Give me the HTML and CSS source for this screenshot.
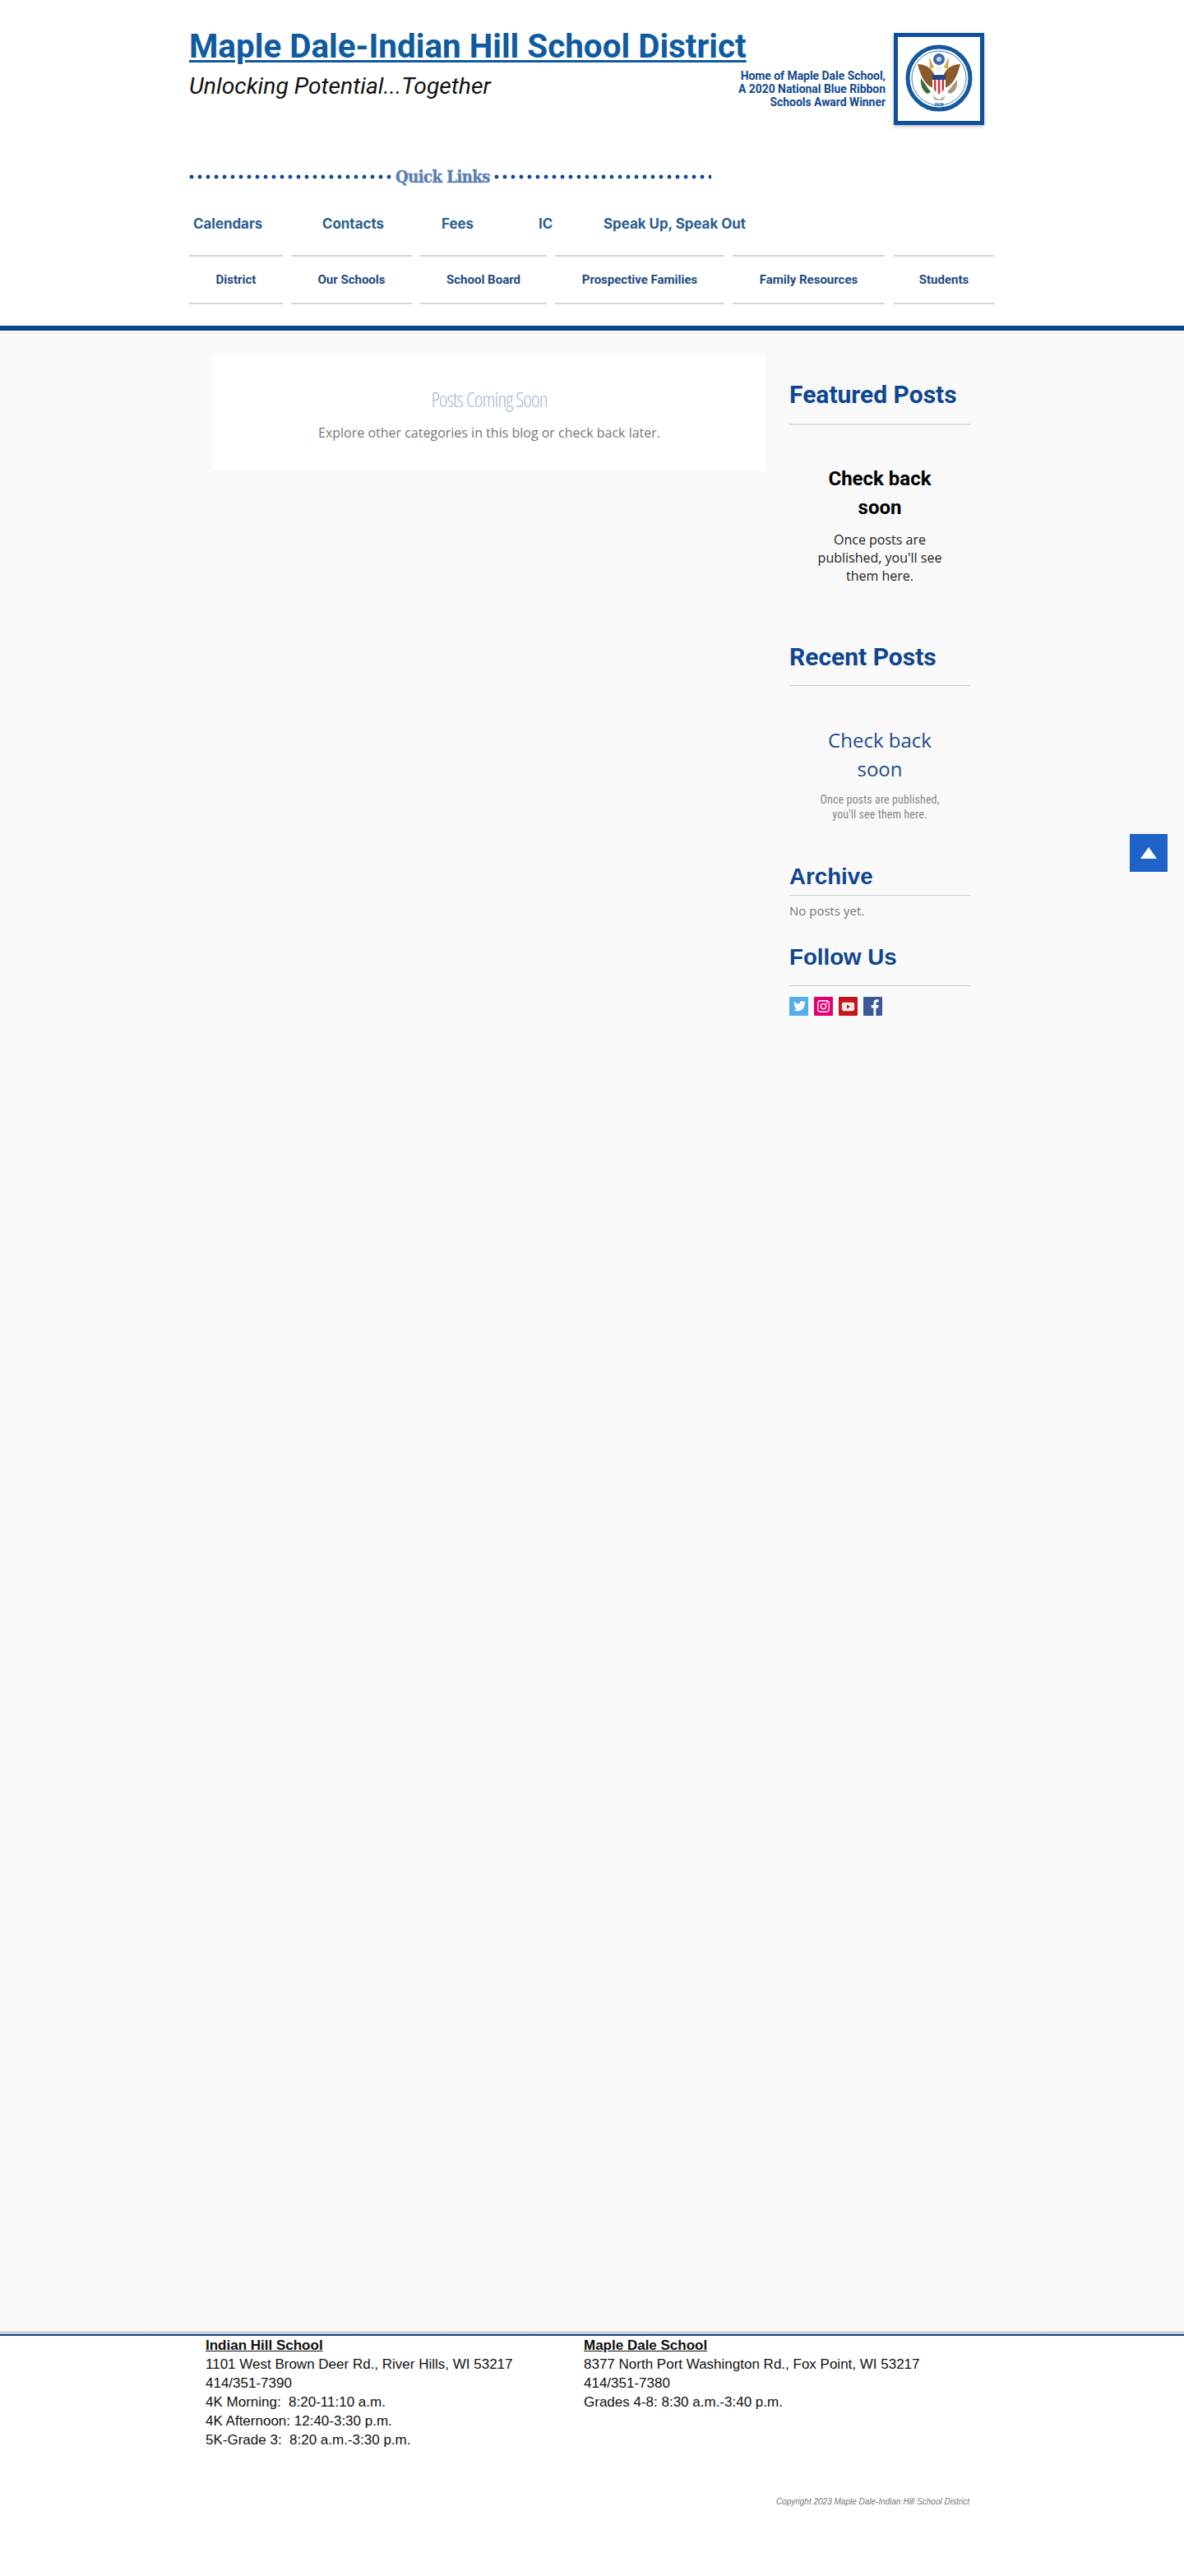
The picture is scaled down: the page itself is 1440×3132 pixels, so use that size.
FILE: index.html
```html
<!DOCTYPE html>
<html>
<head lang="en">
    <meta charset="UTF-8">
    <title>Maple Dale-Indian Hill School District</title>
    <link rel="stylesheet" href="styles.css">
</head>
<body>
<header class="site-head">
    <div class="wrap">
        <div class="brand">
            <div class="brand-text">
                <a class="site-title" href="#">Maple Dale-Indian Hill School District</a>
                <p class="tagline">Unlocking Potential...Together</p>
            </div>
            <p class="award">Home of Maple Dale School,<br/>A 2020 National Blue Ribbon<br/>Schools Award Winner</p>
            <div class="seal">
                <svg viewBox="0 0 102 104" width="102" height="104">
                    <circle cx="50" cy="50" r="38" fill="#fff" stroke="#14589f" stroke-width="5"/>
                    <circle cx="50" cy="50" r="33" fill="#fff" stroke="#14589f" stroke-width=".8"/>
                    <circle cx="50" cy="27" r="7" fill="#3f68a8"/>
                    <circle cx="50" cy="27" r="3" fill="#c9d4e6"/>
                    <path d="M38 24l6 13-5 2zM62 24l-6 13 5 2z" fill="#cfa945"/>
                    <path d="M24 33c9 0 16 4 20 12l-1 17c-9-3-15-13-19-29z" fill="#8a5a2b"/>
                    <path d="M76 33c-9 0-16 4-20 12l1 17c9-3 15-13 19-29z" fill="#8a5a2b"/>
                    <circle cx="50" cy="38" r="4" fill="#f3f1e8"/>
                    <path d="M28 50l12 17-4 2c-6-3-9-11-8-19z" fill="#3d6b34"/>
                    <path d="M72 52l-12 15 4 2c6-3 9-9 8-17z" fill="#a89a80"/>
                    <path d="M42 46h16v14c0 5-4 8-8 10-4-2-8-5-8-10z" fill="#fff"/>
                    <path d="M42 46h16v6h-16z" fill="#27468c"/>
                    <path d="M44 52h2.400v15l-2.400-3zM48.800 52h2.400v17h-2.400zM53.600 52h2.400v12l-2.400 3z" fill="#c8323c"/>
                    <path d="M42 71l8 5 8-5-3 6h-10z" fill="#b9b4a6"/>
                    <text class="seal-year" x="50" y="84" text-anchor="middle">2020</text>
                </svg>
            </div>
        </div>

        <div class="quick">
            <span class="dots dots-left"></span>
            <span class="quick-label">Quick Links</span>
            <span class="dots dots-right"></span>
        </div>

        <nav class="links">
            <a href="#">Calendars</a>
            <a href="#">Contacts</a>
            <a href="#">Fees</a>
            <a href="#">IC</a>
            <a href="#">Speak Up, Speak Out</a>
        </nav>

        <nav class="menu">
            <a class="m1" href="#">District</a>
            <a class="m2" href="#">Our Schools</a>
            <a class="m3" href="#">School Board</a>
            <a class="m4" href="#">Prospective Families</a>
            <a class="m5" href="#">Family Resources</a>
            <a class="m6" href="#">Students</a>
        </nav>
    </div>
</header>

<main class="content">
    <div class="wrap columns">
        <section class="empty-card">
            <h2>Posts Coming Soon</h2>
            <p>Explore other categories in this blog or check back later.</p>
        </section>

        <aside class="sidebar">
            <h3 class="side-title featured">Featured Posts</h3>
            <div class="soon-bold">Check back<br/>soon</div>
            <p class="soon-dark">Once posts are<br/>published, you'll see<br/>them here.</p>

            <h3 class="side-title recent">Recent Posts</h3>
            <div class="soon-blue">Check back<br/>soon</div>
            <p class="soon-grey">Once posts are published,<br/>you'll see them here.</p>

            <h3 class="side-title archive">Archive</h3>
            <p class="no-posts">No posts yet.</p>

            <h3 class="side-title follow">Follow Us</h3>
            <div class="social">
                <a class="tw" href="#"><svg viewBox="0 0 24 24"><path d="M19.500 8.300c0 .2 0 .3 0 .5 0 5-3.800 9.200-9.300 9.200-1.900 0-3.600-.5-5-1.500 1.600.2 3.400-.3 4.600-1.300-1.400 0-2.600-1-3-2.200.5.100 1 .1 1.500-.1-1.500-.3-2.600-1.600-2.600-3.200.4.200.9.400 1.500.4-1.400-1-1.800-2.900-1-4.300 1.600 2 4 3.300 6.700 3.400-.5-2.100 1.100-4 3.200-4 .9 0 1.800.4 2.400 1 .7-.1 1.400-.4 2-.8-.2.700-.7 1.300-1.400 1.700.6-.1 1.300-.2 1.900-.5-.5.700-1 1.300-1.500 1.700z" fill="#fff"/></svg></a>
                <a class="ig" href="#"><svg viewBox="0 0 24 24"><rect x="5" y="5" width="14" height="14" rx="3.500" fill="none" stroke="#fff" stroke-width="1.400"/><circle cx="12" cy="12" r="3.300" fill="none" stroke="#fff" stroke-width="1.400"/><circle cx="16.200" cy="7.800" r=".9" fill="#fff"/></svg></a>
                <a class="yt" href="#"><svg viewBox="0 0 24 24"><rect x="4" y="7" width="16" height="11" rx="2.500" fill="#f4e6e0"/><path d="M10.500 10l4 2.500-4 2.500z" fill="#a81a20"/></svg></a>
                <a class="fb" href="#"><svg viewBox="0 0 24 24"><path d="M13 24v-10h-2.800v-3.500h2.800v-2.500c0-3 1.700-4.500 4.300-4.500 1 0 1.900.1 2.200.1v3h-1.700c-1.400 0-1.700.7-1.700 1.700v2.200h3.300l-.5 3.500h-2.800v10z" fill="#fff"/></svg></a>
            </div>
        </aside>
    </div>
</main>

<a class="to-top" href="#"><span class="arrow"></span></a>

<footer class="site-foot">
    <div class="wrap">
        <div class="schools">
            <div class="school">
                <strong>Indian Hill School</strong><br/>
                1101 West Brown Deer Rd., River Hills, WI 53217<br/>
                414/351-7390<br/>
                4K Morning:&nbsp; 8:20-11:10 a.m.<br/>
                4K Afternoon: 12:40-3:30 p.m.<br/>
                5K-Grade 3:&nbsp; 8:20 a.m.-3:30 p.m.
            </div>
            <div class="school">
                <strong>Maple Dale School</strong><br/>
                8377 North Port Washington Rd., Fox Point, WI 53217<br/>
                414/351-7380<br/>
                Grades 4-8: 8:30 a.m.-3:40 p.m.
            </div>
        </div>
        <p class="copyright">Copyright 2023 Maple Dale-Indian Hill School District</p>
    </div>
</footer>
</body>
</html>
```

FILE: styles.css
```css
* {
    margin: 0;
    padding: 0;
    box-sizing: border-box;
}
html, body {
    height: 100%;
}
body {
    position: relative;
    display: flex;
    flex-direction: column;
    min-height: 3132px;
    background: #f9f9f9;
    font-family: "Open Sans", sans-serif;
}
a {
    color: inherit;
    text-decoration: none;
}
.wrap {
    width: 980px;
    margin: 0 auto;
}

/* header */
.site-head {
    height: 396px;
    background: #fff;
}
.brand {
    display: flex;
    height: 191px;
    padding-top: 33px;
}
.brand-text {
    width: 667px;
}
.site-title {
    display: inline-block;
    font: 700 40.4px/47px Roboto, sans-serif;
    color: #0f5ba0;
    text-decoration: underline;
    text-decoration-thickness: 3px;
    text-underline-offset: 3px;
    white-space: nowrap;
}
.tagline {
    margin-top: 8px;
    font: italic 400 28.3px/34px Roboto, sans-serif;
    color: #111;
}
.award {
    width: 180px;
    margin-top: 51px;
    font: 700 13.9px/16px Roboto, sans-serif;
    color: #10498f;
    text-align: right;
    white-space: nowrap;
}
.seal {
    width: 110px;
    height: 112px;
    margin: 7px 0 0 10px;
    background: #fff;
    border: 5px solid #0f4f9e;
    box-shadow: 0 2px 4px rgba(0, 0, 0, .25);
}
.seal svg {
    display: block;
}
.seal-year {
    font: 700 5px Roboto, sans-serif;
    fill: #14589f;
}

.quick {
    display: flex;
    align-items: center;
    width: 640px;
    height: 48px;
}
.quick-label {
    margin: 0 5px;
    font: 700 20px/24px "DejaVu Serif Condensed", "DejaVu Serif", serif;
    letter-spacing: -.5px;
    color: #5a7fb0;
    -webkit-text-stroke: .4px #5a7fb0;
    white-space: nowrap;
}
.dots {
    height: 6px;
    background: radial-gradient(circle at center, #14478c 2.2px, transparent 2.7px) -2px center / 10px 6px repeat-x;
}
.dots-left {
    width: 246px;
}
.dots-right {
    width: 264px;
}

.links {
    display: grid;
    grid-template-columns: 157px 145px 118px 79px auto;
    height: 71px;
    align-items: center;
    padding: 0 0 5px 5px;
    font: 700 16.9px/20px Inter, sans-serif;
    color: #2a5e90;
}
.menu {
    display: flex;
    gap: 10px;
    height: 60px;
    width: 980px;
}
.menu a {
    display: flex;
    align-items: center;
    justify-content: center;
    height: 60px;
    border-top: 2px solid #d4d4d4;
    border-bottom: 2px solid #d4d4d4;
    font: 700 15px/18px Roboto, sans-serif;
    color: #1f4a80;
}
.m1 { width: 114px; }
.m2 { width: 147px; }
.m3 { width: 154px; }
.m4 { width: 206px; }
.m5 { width: 185px; }
.m6 { width: 122px; margin-left: 1px; }

/* main */
.content {
    flex: 1;
    background: linear-gradient(#0f4690, #0f4690) top / 100% 6px no-repeat,
        linear-gradient(#0b3c80, #0b3c80) 0 2px / 100% 2px no-repeat,
        linear-gradient(#fff 8px, #eeeeea 8px, #eeeeea 10px, #fff 10px, #fff 12px, #f9f9f9 12px);
}
.columns {
    display: flex;
    align-items: flex-start;
    padding-top: 36px;
}
.empty-card {
    width: 672px;
    height: 140px;
    margin-left: 29px;
    padding-top: 36px;
    background: #fff;
    text-align: center;
}
.empty-card h2 {
    font: 300 25px/34px "Open Sans", sans-serif;
    font-stretch: 75%;
    letter-spacing: -.8px;
    color: #a3b9d0;
}
.empty-card p {
    margin-top: 13px;
    font-size: 16px;
    line-height: 22px;
    color: #777;
}
.sidebar {
    width: 220px;
    margin-left: 29px;
}
.side-title {
    font: 700 30px/36px Roboto, sans-serif;
    color: #0f4690;
    border-bottom: 1px solid #ccc;
}
.featured {
    margin-top: 30px;
    padding-bottom: 17px;
    border-bottom: 2px solid #ddd;
}
.recent {
    margin-top: 70px;
    padding-bottom: 16px;
}
.archive, .follow {
    font: 700 27.7px/36px "Liberation Sans", Arial, sans-serif;
}
.archive {
    margin-top: 49px;
    padding-bottom: 4px;
}
.follow {
    margin-top: 29px;
    padding-bottom: 16px;
}
.soon-bold, .soon-blue {
    text-align: center;
    font-size: 24px;
    line-height: 35px;
}
.soon-bold {
    margin-top: 48px;
    font-family: Roboto, sans-serif;
    font-weight: 700;
    color: #000;
}
.soon-blue {
    margin-top: 48px;
    color: #1f4b8a;
}
.soon-dark {
    margin-top: 10px;
    text-align: center;
    font-size: 16px;
    line-height: 22px;
    color: #222;
}
.soon-grey {
    margin-top: 11px;
    text-align: center;
    font: 400 14px/18px "Liberation Sans Narrow", "Roboto Condensed", Roboto, sans-serif;
    letter-spacing: .1px;
    color: #888;
}
.no-posts {
    margin-top: 8px;
    font-size: 15px;
    line-height: 20px;
    color: #777;
}
.social {
    display: flex;
    gap: 7px;
    margin-top: 13px;
}
.social a {
    display: block;
    width: 23px;
    height: 23px;
    border-radius: 1px;
    overflow: hidden;
}
.social svg {
    display: block;
    width: 23px;
    height: 23px;
}
.tw { background: #55acee; }
.ig { background: #e4006f; }
.yt { background: #c4161c; }
.fb { background: #3b5998; }

.to-top {
    position: absolute;
    left: 1374px;
    top: 1014px;
    display: flex;
    align-items: center;
    justify-content: center;
    width: 46px;
    height: 46px;
    background: #1f62c8;
}
.arrow {
    width: 0;
    height: 0;
    border-left: 10px solid transparent;
    border-right: 10px solid transparent;
    border-bottom: 14px solid #fff;
}

/* footer */
.site-foot {
    height: 298px;
    padding-top: 6px;
    background: linear-gradient(#e4e4e4, #bfc3c6 4px, #1d4a82 4px, #1d4a82 6px, #fff 6px);
}
.schools {
    display: flex;
    padding-left: 20px;
    font: 400 17px/23px "Liberation Sans", Arial, sans-serif;
    color: #111;
}
.school {
    width: 460px;
}
.school strong {
    text-decoration: underline;
}
.copyright {
    margin-top: 57px;
    padding-right: 31px;
    text-align: right;
    font: italic 400 10px/14px "Liberation Sans", Arial, sans-serif;
    color: #777;
}
```
